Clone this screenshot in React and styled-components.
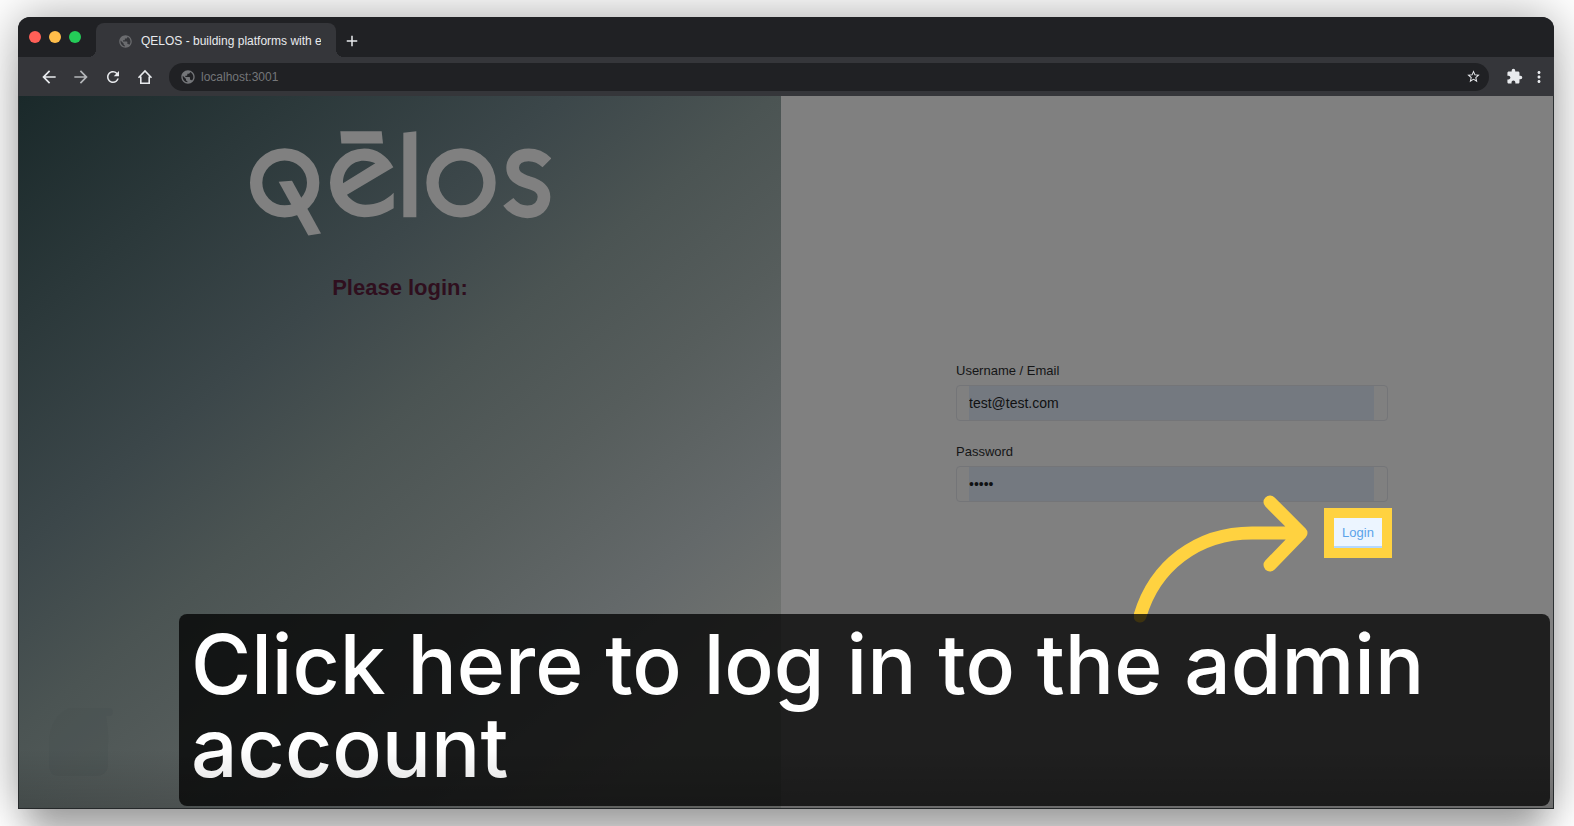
import React from "react";
import styled, { createGlobalStyle } from "styled-components";
import { MdArrowBack, MdArrowForward, MdRefresh, MdPublic, MdStarBorder, MdExtension, MdMoreVert, MdAdd } from "react-icons/md";

const GlobalStyle = createGlobalStyle`
  *, *::before, *::after { box-sizing: border-box; }
  body { margin: 0; background: #fff; font-family: "Liberation Sans", Arial, sans-serif; }
  button, input { font: inherit; }
`;

const Page = styled.div`
  min-height: 100vh;
  display: flex;
  padding: 17px 20px 17px 18px;
  overflow: hidden;
`;

const BrowserWindow = styled.div`
  position: relative;
  flex: 1;
  display: flex;
  flex-direction: column;
  border-radius: 12px 12px 0 0;
  background: #35363a;
  box-shadow: 0 0 48px rgba(0, 0, 0, 0.36), 0 44px 32px -12px rgba(0, 0, 0, 0.22);
`;

const TabStrip = styled.header`
  display: flex;
  align-items: flex-end;
  height: 40px;
  padding-left: 11px;
  border-radius: 12px 12px 0 0;
  background: #202124;
`;

const TrafficLights = styled.div`
  display: flex;
  gap: 8px;
  height: 40px;
  align-items: center;
  margin-right: 15px;
`;

const Light = styled.span`
  width: 12px;
  height: 12px;
  border-radius: 50%;
  background: ${(p) => p.$color};
`;

const Tab = styled.div`
  position: relative;
  display: flex;
  align-items: center;
  gap: 8px;
  width: 240px;
  height: 34px;
  padding: 2px 15px 0 22px;
  border-radius: 8px 8px 0 0;
  background: #35363a;
  color: #e8eaed;
  font-size: 12px;
  &::before, &::after {
    content: "";
    position: absolute;
    bottom: 0;
    width: 8px;
    height: 8px;
  }
  &::before { right: 100%; background: radial-gradient(circle at 0 0, transparent 8px, #35363a 8px); }
  &::after { left: 100%; background: radial-gradient(circle at 100% 0, transparent 8px, #35363a 8px); }
  svg { flex: none; color: #6b6c6f; }
`;

const TabTitle = styled.span`
  overflow: hidden;
  white-space: nowrap;
`;

const IconButton = styled.button`
  display: flex;
  align-items: center;
  justify-content: center;
  flex: none;
  width: ${(p) => p.$width || 32}px;
  height: 32px;
  padding: 0;
  border: 0;
  background: none;
  color: ${(p) => p.$color || "#e8eaed"};
`;

const Toolbar = styled.nav`
  display: flex;
  align-items: center;
  height: 39px;
  padding: 0 6px 0 15px;
`;

const AddressBar = styled.label`
  flex: 1;
  display: flex;
  align-items: center;
  gap: 5px;
  height: 28px;
  margin: 0 9px 0 8px;
  padding-left: 11px;
  border-radius: 14px;
  background: #202124;
  color: #747679;
`;

const AddressInput = styled.input`
  flex: 1;
  padding: 0;
  border: 0;
  outline: 0;
  background: none;
  color: #747679;
  font-size: 12px;
`;

const Content = styled.main`
  flex: 1;
  display: grid;
  grid-template-columns: 763fr 773fr;
  border: solid #2c3032;
  border-width: 0 1px 1px 1px;
`;

const BrandPanel = styled.section`
  position: relative;
  display: flex;
  flex-direction: column;
  align-items: center;
  padding-top: 34px;
  background: linear-gradient(140deg, #1a292a 0%, #3c474a 34%, #4b5453 47%, #565d5c 60%, #64696a 75%, #727471 88%);
`;

const Heading = styled.h1`
  margin: 38px 0 0;
  color: #2f0f1e;
  font-size: 22px;
  line-height: 26px;
`;

const PanelMark = styled.svg`
  position: absolute;
  left: 30px;
  bottom: 30px;
`;

const LoginPanel = styled.section`
  display: flex;
  justify-content: center;
  align-items: center;
  padding: 0 0 0 10px;
  background: #808080;
`;

const LoginForm = styled.form`
  display: flex;
  flex-direction: column;
  width: 432px;
  max-width: 100%;
  padding-top: 15px;
`;

const Field = styled.div`
  display: flex;
  flex-direction: column;
  margin-bottom: ${(p) => (p.$last ? 6 : 21)}px;
`;

const FieldLabel = styled.label`
  height: 24px;
  color: #141516;
  font-size: 13px;
  line-height: 20px;
`;

const InputFrame = styled.div`
  height: 36px;
  padding: 0 13px 0 12px;
  border: 1px solid #747578;
  border-radius: 4px;
`;

const TextInput = styled.input`
  display: block;
  width: 100%;
  height: 100%;
  padding: 0;
  border: 0;
  border-radius: 0;
  outline: 0;
  background: #747980;
  color: #101112;
  font-size: 14px;
`;

const Highlight = styled.div`
  position: relative;
  align-self: flex-end;
  margin-right: -4px;
  border: 10px solid #ffd240;
`;

const LoginButton = styled.button`
  display: block;
  width: 48px;
  height: 30px;
  padding: 0;
  border: 0;
  border-bottom: 2px solid #b3d8ff;
  background: #ecf5ff;
  color: #5ba3ea;
  font-size: 13px;
`;

const Arrow = styled.svg`
  position: absolute;
  right: 100%;
  top: -24px;
  margin-right: 24px;
`;

const Caption = styled.p`
  position: absolute;
  left: 161px;
  right: 4px;
  bottom: 3px;
  margin: 0;
  padding: 9px 12px 17px;
  border-radius: 8px;
  background: rgba(0, 0, 0, 0.76);
  color: #fff;
  font-family: Inter, sans-serif;
  font-size: 82px;
  font-weight: 500;
  line-height: 83px;
`;

const BottomShade = styled.div`
  position: absolute;
  inset: auto 0 0 0;
  height: 60px;
  background: linear-gradient(transparent, rgba(0, 0, 0, 0.16));
  pointer-events: none;
`;

function HomeIcon() {
  return (
    <svg width="16" height="16" viewBox="0 0 16 16" fill="none" stroke="currentColor" strokeWidth="1.6" aria-hidden="true">
      <path d="M1.500 8.800 8 2l6.500 6.800M3.800 7.500v6.700h8.400V7.500" />
    </svg>
  );
}

function Logo() {
  return (
    <svg width="301" height="107" viewBox="59 61 903 320" fill="#808080" role="img" aria-label="Qelos">
      <circle cx="163" cy="219" r="85.500" fill="none" stroke="#808080" strokeWidth="37" />
      <path d="M145 216 185 213 272 371 234 377Z" />
      <path d="M330 64H454L458 101H333Z" />
      <path fillRule="evenodd" d="M489 172C470 137 438 116 402 116A103 103 0 0 0 299 219A103 103 0 0 0 402 322C438 322 465 310 490 295V249C468 272 438 285 405 285C384 285 362 273 350 255ZM338 220C338 180 366 153 400 153C413 153 425 156 435 160Z" />
      <path d="M519 69 558 64V322H519Z" />
      <circle cx="692" cy="219" r="85.500" fill="none" stroke="#808080" strokeWidth="37" />
      <path d="M950 159C934 143 916 135 895 135C866 135 847 151 847 174C847 197 864 208 895 218C926 227 941 239 941 261C941 288 920 306 891 306C868 306 849 296 834 276" fill="none" stroke="#808080" strokeWidth="38" />
    </svg>
  );
}

export default function App() {
  return (
    <Page>
      <GlobalStyle />
      <BrowserWindow>
        <TabStrip>
          <TrafficLights>
            <Light $color="#ff5f57" />
            <Light $color="#ffbd4a" />
            <Light $color="#24cb58" />
          </TrafficLights>
          <Tab>
            <MdPublic size={15} />
            <TabTitle>QELOS - building platforms with e</TabTitle>
          </Tab>
          <IconButton aria-label="New tab"><MdAdd size={18} /></IconButton>
        </TabStrip>
        <Toolbar>
          <IconButton aria-label="Back"><MdArrowBack size={20} /></IconButton>
          <IconButton aria-label="Forward" $color="#b4b6b9"><MdArrowForward size={20} /></IconButton>
          <IconButton aria-label="Reload"><MdRefresh size={18} /></IconButton>
          <IconButton aria-label="Home"><HomeIcon /></IconButton>
          <AddressBar>
            <MdPublic size={16} />
            <AddressInput aria-label="Address" defaultValue="localhost:3001" />
            <IconButton type="button" aria-label="Bookmark"><MdStarBorder size={15} /></IconButton>
          </AddressBar>
          <IconButton aria-label="Extensions"><MdExtension size={17} /></IconButton>
          <IconButton aria-label="Menu" $width={18}><MdMoreVert size={20} /></IconButton>
        </Toolbar>
        <Content>
          <BrandPanel>
            <Logo />
            <Heading>Please login:</Heading>
            <PanelMark width="64" height="72" viewBox="0 0 64 72" fill="#475150" fillOpacity="0.35" aria-hidden="true">
              <path d="M20 2H60Q64 2 64 6T60 10H57Q60 26 59 38V60Q58 70 46 70H10Q0 70 0 58V34Q2 10 20 2Z" />
            </PanelMark>
          </BrandPanel>
          <LoginPanel>
            <LoginForm>
              <Field>
                <FieldLabel htmlFor="username">Username / Email</FieldLabel>
                <InputFrame><TextInput id="username" type="text" defaultValue="test@test.com" /></InputFrame>
              </Field>
              <Field $last>
                <FieldLabel htmlFor="password">Password</FieldLabel>
                <InputFrame><TextInput id="password" type="password" defaultValue="admin" /></InputFrame>
              </Field>
              <Highlight>
                <LoginButton type="button">Login</LoginButton>
                <Arrow width="176" height="130" viewBox="0 0 176 130" fill="none" stroke="#ffd240" strokeWidth="13" strokeLinecap="round" strokeLinejoin="round" aria-hidden="true">
                  <path d="M6 122C20 74 62 37 123 39Q148 39 167 39M136 8 167 39 136 71" />
                </Arrow>
              </Highlight>
            </LoginForm>
          </LoginPanel>
        </Content>
        <Caption>Click here to log in to the admin account</Caption>
        <BottomShade />
      </BrowserWindow>
    </Page>
  );
}
